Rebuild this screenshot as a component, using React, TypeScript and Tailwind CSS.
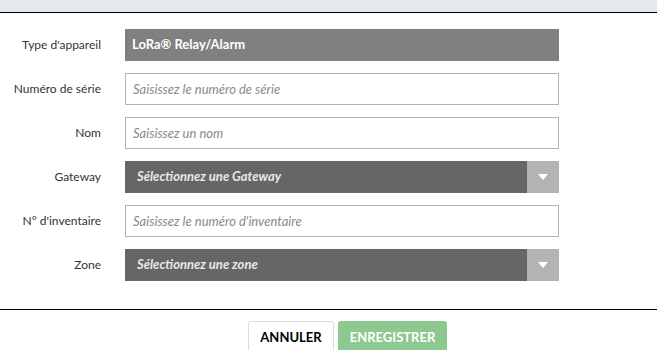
import { useState } from 'react';

const labelCls = 'w-[101px] shrink-0 text-right text-[12px] text-[#333]';
const boxCls = 'w-[434px] h-[32px] flex items-center text-[13px]';

function Row({ label, children }: { label: string; children: React.ReactNode }) {
  return (
    <div className="flex items-center gap-6">
      <div className={labelCls}>{label}</div>
      {children}
    </div>
  );
}

function TextField({ placeholder }: { placeholder: string }) {
  const [value, setValue] = useState('');
  return (
    <input
      value={value}
      onChange={(e) => setValue(e.target.value)}
      placeholder={placeholder}
      className={`${boxCls} border border-[#b3b3b3] bg-white px-[7px] italic text-[#333] placeholder:text-[#8a8a8a] outline-none`}
    />
  );
}

function SelectField({ placeholder }: { placeholder: string }) {
  return (
    <div className={`${boxCls} bg-[#666]`}>
      <span className="flex-1 pl-[12px] font-bold italic text-[#e8e8e8]">{placeholder}</span>
      <span className="w-[32px] h-full bg-[#b3b3b3] flex items-center justify-center">
        <svg width="10" height="6" viewBox="0 0 10 6">
          <path d="M0 0 L10 0 L5 6 Z" fill="#fff" />
        </svg>
      </span>
    </div>
  );
}

export default function App() {
  return (
    <div className="w-[657px] h-[350px] bg-white overflow-hidden font-['Lato',sans-serif]">
      {/* Header strip */}
      <div className="h-[13px] bg-[#e6e9ec] border-b border-black" />

      {/* Form */}
      <div className="flex flex-col gap-3 pt-4 pb-[28px]">
        <Row label="Type d'appareil">
          <div className={`${boxCls} bg-[#808080] px-[7px] font-bold text-white`}>LoRa® Relay/Alarm</div>
        </Row>
        <Row label="Numéro de série">
          <TextField placeholder="Saisissez le numéro de série" />
        </Row>
        <Row label="Nom">
          <TextField placeholder="Saisissez un nom" />
        </Row>
        <Row label="Gateway">
          <SelectField placeholder="Sélectionnez une Gateway" />
        </Row>
        <Row label="N° d'inventaire">
          <TextField placeholder="Saisissez le numéro d'inventaire" />
        </Row>
        <Row label="Zone">
          <SelectField placeholder="Sélectionnez une zone" />
        </Row>
      </div>

      {/* Footer */}
      <div className="border-t border-black flex justify-center gap-1 pt-[11px] pl-[38px]">
        <button className="h-[34px] w-[86px] rounded-[3px] border border-[#ddd] bg-white text-[13px] font-bold text-black">
          ANNULER
        </button>
        <button className="h-[34px] w-[109px] rounded-[3px] bg-[#8dc98f] text-[13px] font-bold text-white">
          ENREGISTRER
        </button>
      </div>
    </div>
  );
}
